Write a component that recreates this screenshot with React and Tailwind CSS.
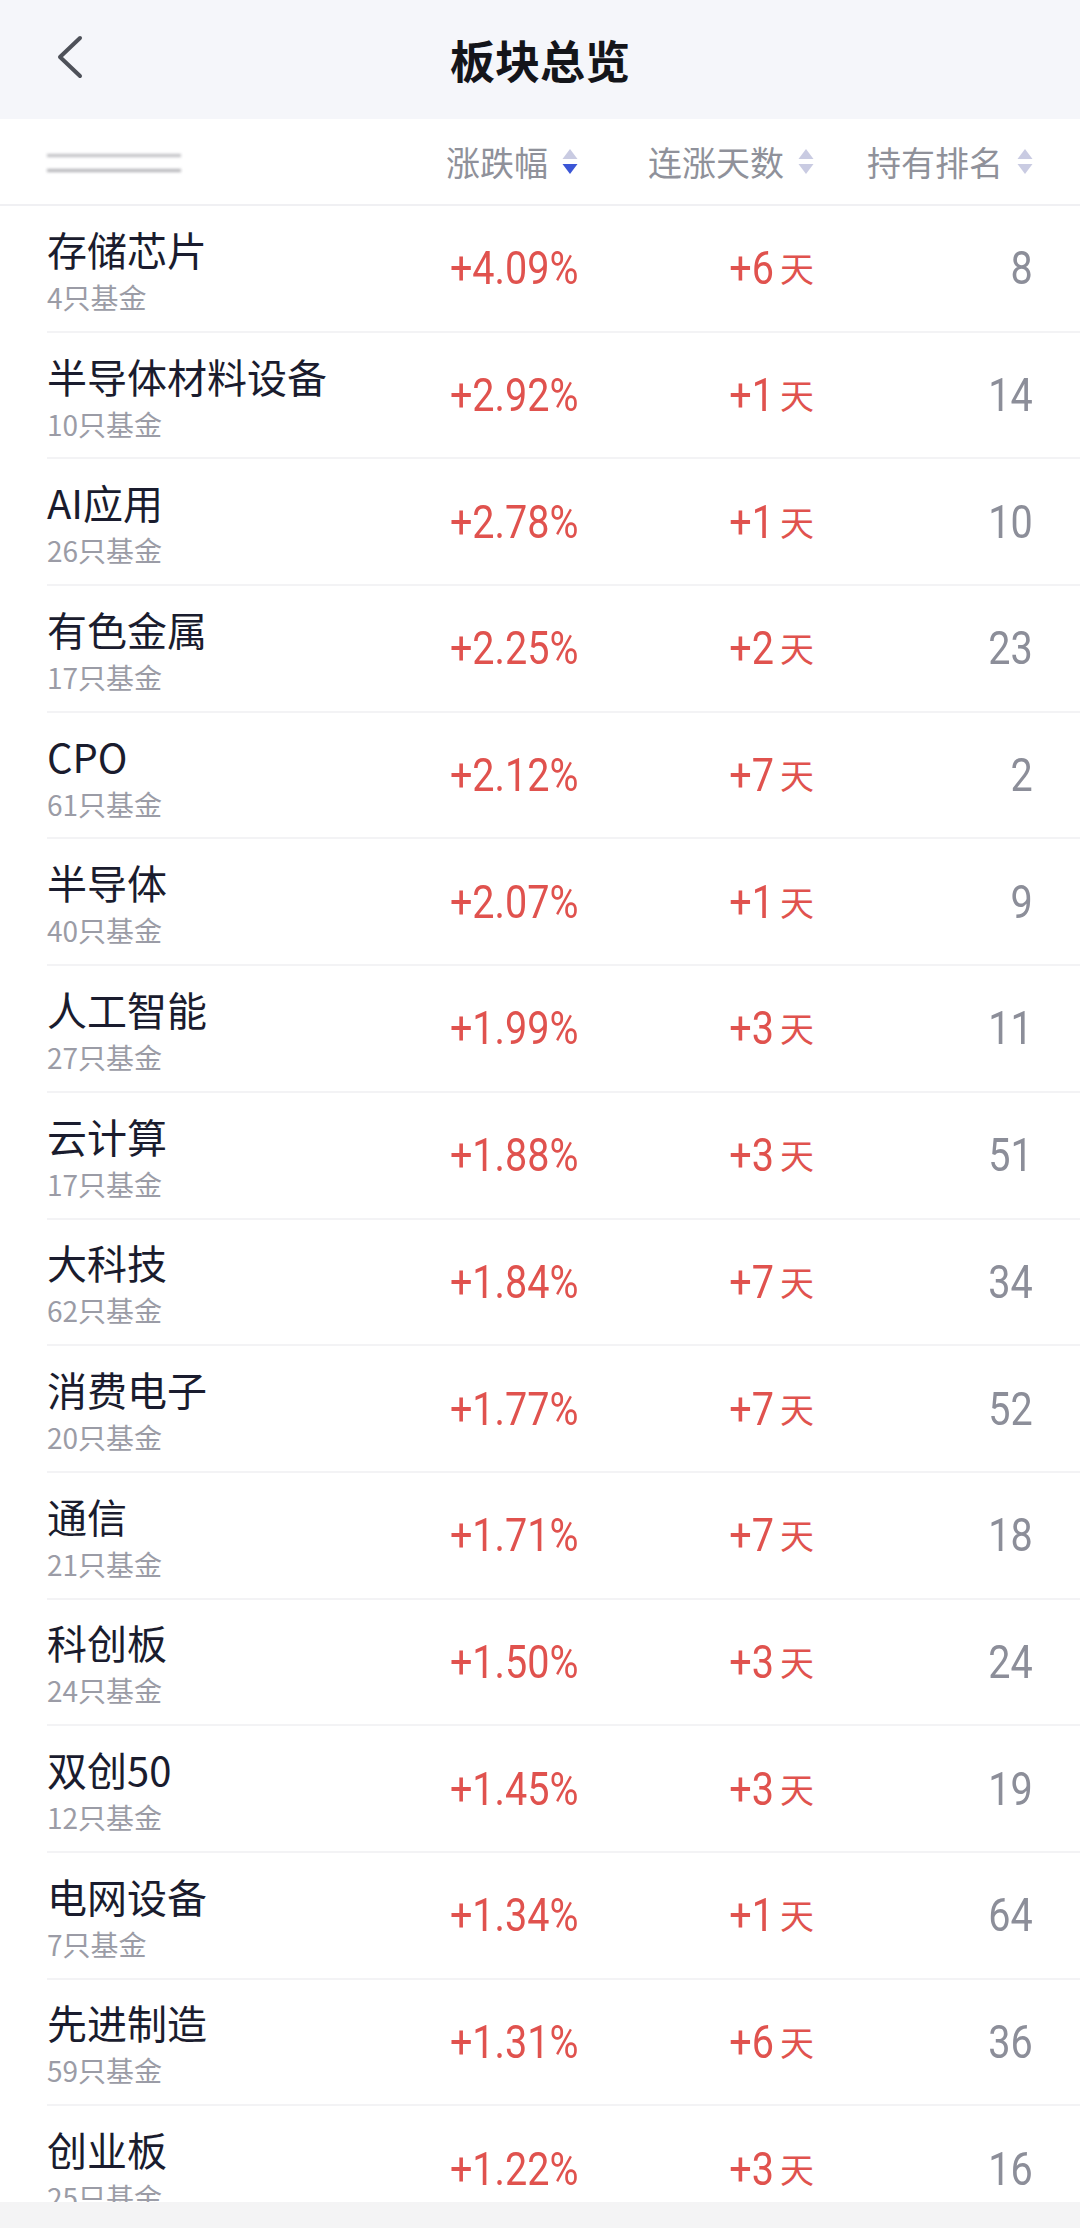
import React from "react";

const rows = [
  ["存储芯片", 4, "+4.09%", "+6", 8],
  ["半导体材料设备", 10, "+2.92%", "+1", 14],
  ["AI应用", 26, "+2.78%", "+1", 10],
  ["有色金属", 17, "+2.25%", "+2", 23],
  ["CPO", 61, "+2.12%", "+7", 2],
  ["半导体", 40, "+2.07%", "+1", 9],
  ["人工智能", 27, "+1.99%", "+3", 11],
  ["云计算", 17, "+1.88%", "+3", 51],
  ["大科技", 62, "+1.84%", "+7", 34],
  ["消费电子", 20, "+1.77%", "+7", 52],
  ["通信", 21, "+1.71%", "+7", 18],
  ["科创板", 24, "+1.50%", "+3", 24],
  ["双创50", 12, "+1.45%", "+3", 19],
  ["电网设备", 7, "+1.34%", "+1", 64],
  ["先进制造", 59, "+1.31%", "+6", 36],
  ["创业板", 25, "+1.22%", "+3", 16],
];

const cjk = "font-['Noto_Sans_CJK_SC','Noto_Sans',sans-serif]";
const num = "font-['Roboto','Noto_Sans',sans-serif]";

function SortIcon({ active }) {
  return (
    <svg width="16" height="26" viewBox="0 0 16 26" className="ml-[14px] shrink-0">
      <path d="M8 0 L15.5 10 L0.5 10 Z" fill="#c9cbe2" />
      <path d="M0.5 15 L15.5 15 L8 25 Z" fill={active ? "#3b56d6" : "#c9cbe2"} />
    </svg>
  );
}

function HeadCell({ label, active, w }) {
  return (
    <div className={`${w} flex items-center justify-end`}>
      <span className={`${cjk} text-[34px] leading-[50px] text-[#8f919a]`}>{label}</span>
      <SortIcon active={active} />
    </div>
  );
}

export default function App() {
  return (
    <div className="w-[1080px] h-[2228px] flex flex-col bg-white overflow-hidden">
      {/* top bar */}
      <div className="h-[119px] shrink-0 bg-[#f5f6fa] relative flex items-center justify-center">
        <svg
          width="30"
          height="46"
          viewBox="0 0 30 46"
          className="absolute left-[54px] top-[34px]"
        >
          <path
            d="M26 4 L6 23 L26 42"
            fill="none"
            stroke="#4e5159"
            strokeWidth="4"
            strokeLinecap="round"
            strokeLinejoin="round"
          />
        </svg>
        <span className={`${cjk} text-[45px] font-bold text-[#14151a] leading-[65px]`}>板块总览</span>
      </div>

      {/* column header */}
      <div className="h-[87px] shrink-0 border-b-2 border-[#f0f0f3] flex items-center px-[47px]">
        <div className="w-[331px] flex flex-col gap-[12px] pt-[2px]">
          <div className="w-[134px] h-[3px] bg-[#bdbdc1] blur-[1.5px]" />
          <div className="w-[134px] h-[3px] bg-[#b0b0b5] blur-[1.5px]" />
        </div>
        <HeadCell label="涨跌幅" active w="w-[200px]" />
        <HeadCell label="连涨天数" w="w-[236px]" />
        <HeadCell label="持有排名" w="w-[219px]" />
      </div>

      {/* list */}
      <div className="flex-1 overflow-hidden">
        {rows.map(([name, cnt, pct, days, rank]) => (
          <div key={name} className="h-[126.7px] pl-[47px]">
            <div className="h-full border-b-2 border-[#f3f3f5] flex items-center pr-[47px]">
              <div className="w-[331px] flex flex-col">
                <span className={`${cjk} text-[40px] leading-[58px] text-[#1a1c2e]`}>{name}</span>
                <span className={`${cjk} text-[28px] leading-[40px] -mt-[1px] text-[#9b9ca6]`}>{cnt}只基金</span>
              </div>
              <div className="w-[200px] flex justify-end">
                <span
                  className={`${num} inline-block origin-right scale-x-[0.86] text-[46px] leading-[54px] font-normal text-[#e0524e]`}
                >
                  {pct}
                </span>
              </div>
              <div className="w-[236px] flex justify-end items-center">
                <span
                  className={`${num} inline-block origin-right scale-x-[0.86] text-[46px] leading-[54px] font-normal text-[#e0524e]`}
                >
                  {days}
                </span>
                <span className={`${cjk} ml-[6px] text-[34px] leading-[50px] text-[#e0524e]`}>天</span>
              </div>
              <div className="w-[219px] flex justify-end">
                <span
                  className={`${num} inline-block origin-right scale-x-[0.86] text-[46px] leading-[54px] font-normal text-[#8c8e99]`}
                >
                  {rank}
                </span>
              </div>
            </div>
          </div>
        ))}
      </div>

      {/* bottom bar */}
      <div className="h-[26px] shrink-0 bg-[#f4f4f5]" />
    </div>
  );
}
